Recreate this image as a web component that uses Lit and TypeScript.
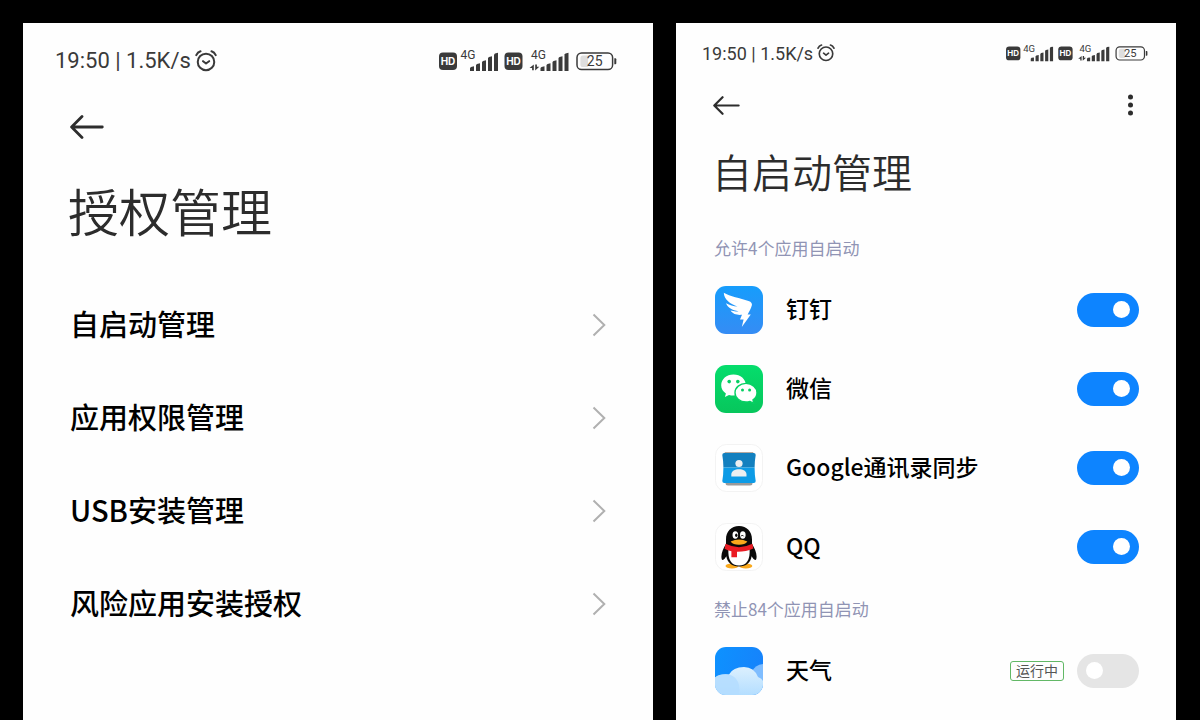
import { LitElement, html, svg, css } from "lit";
import { customElement, property } from "lit/decorators.js";

const BARS = [
  { x: 0, top: 19.5 },
  { x: 6, top: 16.5 },
  { x: 12, top: 13.5 },
  { x: 18, top: 9.5 },
  { x: 24, top: 6 },
];

const signal = (left: number) => svg`${BARS.map(
  (b) => svg`<path d="M${left + b.x} 24V${b.top + 1.4}l1-1l3-.6V24z" />`
)}`;

@customElement("status-bar")
export class StatusBar extends LitElement {
  static styles = css`
    :host {
      display: flex;
      align-items: center;
      justify-content: space-between;
      color: #3a3a3a;
      font-family: Roboto, sans-serif;
    }
    .left {
      display: flex;
      align-items: center;
      gap: 4px;
      white-space: nowrap;
    }
    .alarm {
      width: 1em;
      height: 1em;
    }
    .icons {
      width: var(--icons-width, 178px);
      height: auto;
      fill: #3a3a3a;
    }
    .tag {
      font: 700 10px Inter, sans-serif;
      fill: #fff;
    }
    .net {
      font: 400 12px Roboto, sans-serif;
    }
    .pct {
      font: 400 14px Roboto, sans-serif;
    }
  `;

  render() {
    return html`
      <div class="left">
        <span>19:50 | 1.5K/s</span>
        <svg class="alarm" viewBox="0 0 24 24" fill="none" stroke="#3a3a3a" stroke-width="2.2" stroke-linecap="round" stroke-linejoin="round">
          <circle cx="12" cy="13" r="9" />
          <path d="M8.8 12.200l3.200 2.600l3.400-2.600M1.400 5.600C2.400 3.400 4 2 6 1.400M22.600 5.600C21.600 3.400 20 2 18 1.400" />
        </svg>
      </div>
      <svg class="icons" viewBox="0 0 178 28">
        <rect x="0" y="5.5" width="18" height="17.5" rx="4" />
        <text class="tag" x="9" y="18" text-anchor="middle">HD</text>
        <text class="net" x="21.5" y="12.3">4G</text>
        ${signal(31)}
        <rect x="65.5" y="5.5" width="18" height="17.5" rx="4" />
        <text class="tag" x="74.5" y="18" text-anchor="middle">HD</text>
        <text class="net" x="92" y="12.3">4G</text>
        <path d="M94.8 17.4v5.8h-1.7v-2.200h-2.600zM96.200 23.400v-5.800h1.700v2.200h2.400z" />
        ${signal(101.5)}
        <rect x="138" y="6" width="35.6" height="16.6" rx="4.6" fill="none" stroke="#3a3a3a" stroke-width="1.5" />
        <path d="M144 8.6h5v11.4h-5q-2.6 0-2.6-2.6v-6.2q0-2.6 2.6-2.6z" fill="#dedede" />
        <text class="pct" x="155.7" y="19.3" text-anchor="middle">25</text>
        <path d="M175.3 11.2h1q1 0 1 1v4q0 1-1 1h-1z" />
      </svg>
    `;
  }
}

const backArrow = html`<svg viewBox="0 0 34 24" fill="none" stroke="#2d2d2d" stroke-width="2.8" stroke-linecap="round" stroke-linejoin="round">
  <path d="M32.3 12H2M12 1.6L1.6 12L12 22.4" />
</svg>`;

const shared = css`
  :host {
    display: block;
    background: #fefefe;
    color: #000;
  }
  h1 {
    margin: 0;
    font-weight: 350;
    color: #2c2c2c;
  }
  ul {
    list-style: none;
    margin: 0;
    padding: 0;
  }
  button {
    border: 0;
    background: none;
    padding: 0;
    display: flex;
    align-items: center;
    cursor: pointer;
  }
`;

@customElement("permission-screen")
export class PermissionScreen extends LitElement {
  static styles = [
    shared,
    css`
      status-bar {
        padding: 22px 36px 0 32px;
        height: 31px;
        font-size: 22px;
      }
      .back {
        margin: 27px 0 0 47px;
        height: 48px;
      }
      .back svg {
        width: 34px;
        height: 24px;
      }
      h1 {
        margin: 29px 45px 0;
        font-size: 51px;
        line-height: 60px;
      }
      ul {
        margin-top: 38px;
        padding: 0 47px;
      }
      .row {
        display: flex;
        align-items: center;
        justify-content: space-between;
        height: 93px;
        font-size: 29px;
        font-weight: 500;
        color: inherit;
        text-decoration: none;
      }
      .row span {
        padding-bottom: 4px;
      }
      .row svg {
        width: 14px;
        height: 24px;
      }
    `,
  ];

  items = ["自启动管理", "应用权限管理", "USB安装管理", "风险应用安装授权"];

  render() {
    return html`
      <status-bar></status-bar>
      <button class="back" aria-label="返回">${backArrow}</button>
      <h1>授权管理</h1>
      <ul>
        ${this.items.map(
          (name) => html`<li>
            <a class="row" href="#">
              <span>${name}</span>
              <svg viewBox="0 0 14 24" fill="none" stroke="#b0b0b0" stroke-width="2">
                <path d="M1.5 1.5L12.3 12L1.5 22.5" />
              </svg>
            </a>
          </li>`
        )}
      </ul>
    `;
  }
}

const icons = {
  dingtalk: html`<svg viewBox="0 0 48 48">
    <defs>
      <linearGradient id="dt" x1="0" y1="0" x2="0" y2="1">
        <stop offset="0" stop-color="#169dfc" />
        <stop offset="1" stop-color="#358cf4" />
      </linearGradient>
    </defs>
    <rect width="48" height="48" rx="11" fill="url(#dt)" />
    <path fill="#fff" d="M8.8 6.8C15 10.5 25 12.2 33.5 15C36.5 16 37.4 17.6 36.8 19.5C36 22.5 34.3 25.5 32.6 28.6H35.8L26.8 41L28.6 33.6H25L27 28.8C22.5 29.2 18 28.6 15.6 24.6C18 25.4 21 25.6 23.5 25.2C17.5 24 12.6 21.8 11 17.2C14.5 19.2 18.5 20.2 22.5 20.5C15.5 18 9 14 8.8 6.8Z" />
  </svg>`,
  wechat: html`<svg viewBox="0 0 48 48">
    <defs>
      <linearGradient id="wx" x1="0" y1="0" x2="0" y2="1">
        <stop offset="0" stop-color="#05dd6c" />
        <stop offset="1" stop-color="#07c65c" />
      </linearGradient>
    </defs>
    <rect width="48" height="48" rx="11" fill="url(#wx)" />
    <path fill="#fff" d="M18.5 9.5C11.5 9.5 6.2 14.2 6.2 20.2C6.2 23.6 8 26.5 10.9 28.4L9.9 32L14 29.9C15.5 30.3 17 30.6 18.5 30.6C25.500 30.6 30.9 26 30.9 20.1C30.9 14.2 25.5 9.5 18.5 9.5Z" />
    <path fill="#fff" stroke="#06d164" stroke-width="1.4" d="M31 18.4C37.1 18.4 42 22.6 42 27.7C42 30.7 40.4 33.2 38 34.9L38.7 38.3L35 36.4C33.7 36.8 32.4 37 31 37C24.9 37 20 32.9 20 27.7C20 22.6 24.9 18.4 31 18.4Z" />
    <g fill="#06cf63">
      <circle cx="14.2" cy="16.6" r="1.8" />
      <circle cx="22.8" cy="16.6" r="1.8" />
      <circle cx="27.5" cy="25" r="1.5" />
      <circle cx="34.6" cy="25" r="1.5" />
    </g>
  </svg>`,
  contacts: html`<svg viewBox="0 0 48 48">
    <rect x=".5" y=".5" width="47" height="47" rx="11" fill="#fff" stroke="#f3f3f3" />
    <path d="M10.5 37h27v2q0 2.5-2.5 2.5H13q-2.5 0-2.5-2.5z" fill="#9a9a9a" />
    <path d="M9.5 8h29l-1.5 3h-26z" fill="#b5a9a0" />
    <path d="M7.3 11Q7.3 9 9.3 9H38.7Q40.7 9 40.7 11Q39.6 17 39.6 23.500H8.4Q8.4 17 7.3 11Z" fill="#1380bf" />
    <path d="M8.4 23.5H39.6Q39.6 31 40.7 37Q40.7 39 38.7 39H9.3Q7.3 39 7.3 37Q8.4 31 8.4 23.5Z" fill="#0d9be6" />
    <circle cx="24" cy="19.5" r="3.6" fill="#eceff1" />
    <path d="M16.3 32.5V30.5C16.3 27 20 25.2 24 25.2C28 25.2 31.5 27 31.5 30.5V32.5Z" fill="#eceff1" />
  </svg>`,
  qq: html`<svg viewBox="0 0 48 48">
    <rect x=".5" y=".5" width="47" height="47" rx="11" fill="#fff" stroke="#f3f3f3" />
    <ellipse cx="17" cy="43" rx="6.5" ry="2.4" fill="#f9a81c" />
    <ellipse cx="30.8" cy="43" rx="6.5" ry="2.4" fill="#f9a81c" />
    <path d="M24 3C16.2 3 11 8.5 11 16.5V21C8.5 25 6.4 29.5 6.4 33.5C6.4 36 7 37.2 7.8 37C9 36.8 10.3 35 11.3 33.2C12.2 39.5 17 43.5 24 43.5C31 43.5 35.8 39.5 36.6 33.2C37.6 35 39 36.8 40.2 37C41 37.2 41.6 36 41.6 33.5C41.6 29.5 39.5 25 37 21V16.5C37 8.5 31.8 3 24 3Z" fill="#0a0a0a" />
    <path d="M13.4 26H34.6Q35.5 42.5 24 42.5Q12.5 42.5 13.4 26Z" fill="#fff" />
    <path d="M10.6 20.8Q24 27.6 37.4 20.8L38.3 25.4Q31 28.8 22 28.7V34.3H16.4V28.2Q12.5 27.5 9.6 25.8Z" fill="#ea1c24" />
    <ellipse cx="20.3" cy="12" rx="2.8" ry="3.7" fill="#fff" />
    <ellipse cx="27.8" cy="12" rx="2.8" ry="3.7" fill="#fff" />
    <ellipse cx="21.3" cy="12.3" rx="1.2" ry="1.7" fill="#0a0a0a" />
    <path d="M26.2 13.3Q27.2 10.7 28.6 13.3" fill="none" stroke="#0a0a0a" stroke-width="1" />
    <path d="M15.6 18.4Q24 14.5 32.4 18.4Q30 21.7 24 21.7Q18 21.7 15.6 18.4Z" fill="#f9a81c" />
  </svg>`,
  weather: html`<svg viewBox="0 0 48 48">
    <defs>
      <linearGradient id="sky" x1="0" y1="0" x2="1" y2=".3">
        <stop offset="0" stop-color="#0d92ff" />
        <stop offset="1" stop-color="#1683fb" />
      </linearGradient>
      <linearGradient id="cloud" x1="0" y1="0" x2="0" y2="1">
        <stop offset="0" stop-color="#dcf0fe" />
        <stop offset="1" stop-color="#b4deff" />
      </linearGradient>
      <clipPath id="tile"><rect width="48" height="48" rx="11" /></clipPath>
    </defs>
    <g clip-path="url(#tile)">
      <rect width="48" height="48" fill="url(#sky)" />
      <path d="M36 26Q40 17.500 48 17V48H30Z" fill="#7fbdff" />
      <path d="M0 30.500Q5 26.500 14 27.500Q18 20 29 20Q39 20 43 30Q47 31.500 48 34V48H0Z" fill="url(#cloud)" />
      <path d="M0 30.500Q5 26.500 14 27.500Q22 29.500 24 38Q25 43 24 48H0Z" fill="#b3dcff" opacity=".8" />
    </g>
  </svg>`,
};

interface AppEntry {
  id: keyof typeof icons;
  name: string;
  on: boolean;
  running?: boolean;
}

@customElement("app-row")
export class AppRow extends LitElement {
  static styles = css`
    :host {
      display: block;
    }
    .row {
      display: flex;
      align-items: center;
      height: 79px;
      font-size: 23px;
      font-weight: 500;
    }
    .row > svg {
      width: 48px;
      height: 48px;
      margin-right: 23px;
    }
    label {
      flex: 1;
      padding-bottom: 3px;
    }
    .badge {
      margin-right: 13px;
      padding: 0 5px 2px;
      border: 1px solid #62b866;
      border-radius: 3px;
      font-size: 14px;
      font-weight: 400;
      line-height: 16px;
      color: #555;
    }
    .switch {
      appearance: none;
      display: flex;
      align-items: center;
      box-sizing: border-box;
      width: 62px;
      height: 34px;
      margin: 0;
      padding: 0 9px;
      border-radius: 17px;
      background: #e5e5e5;
      cursor: pointer;
    }
    .switch::before {
      content: "";
      width: 17px;
      height: 17px;
      border-radius: 50%;
      background: #fff;
    }
    .switch:checked {
      background: #0d84ff;
      justify-content: flex-end;
    }
  `;

  @property({ attribute: false }) app!: AppEntry;

  render() {
    const { id, name, on, running } = this.app;
    return html`<div class="row">
      ${icons[id]}
      <label for="toggle">${name}</label>
      ${running ? html`<span class="badge">运行中</span>` : null}
      <input id="toggle" class="switch" type="checkbox" role="switch" ?checked=${on} />
    </div>`;
  }
}

@customElement("autostart-screen")
export class AutostartScreen extends LitElement {
  static styles = [
    shared,
    css`
      status-bar {
        --icons-width: 142px;
        padding: 16px 28px 0 26px;
        height: 28px;
        font-size: 18px;
      }
      header {
        display: flex;
        justify-content: space-between;
        align-items: center;
        height: 40px;
        margin: 18px 40px 0 37px;
      }
      .back svg {
        width: 27px;
        height: 19px;
      }
      .more svg {
        width: 11px;
        height: 24px;
      }
      h1 {
        margin: 22px 36px 0;
        font-size: 40px;
        line-height: 48px;
      }
      h2 {
        margin: 11px 38px 10px;
        font-size: 17px;
        font-weight: 400;
        line-height: 24px;
        color: #9094b4;
      }
      h1 + h2 {
        margin-top: 41px;
      }
      ul {
        padding: 0 37px 0 39px;
      }
    `,
  ];

  allowed: AppEntry[] = [
    { id: "dingtalk", name: "钉钉", on: true },
    { id: "wechat", name: "微信", on: true },
    { id: "contacts", name: "Google通讯录同步", on: true },
    { id: "qq", name: "QQ", on: true },
  ];

  denied: AppEntry[] = [{ id: "weather", name: "天气", on: false, running: true }];

  list(apps: AppEntry[]) {
    return html`<ul>
      ${apps.map((app) => html`<li><app-row .app=${app}></app-row></li>`)}
    </ul>`;
  }

  render() {
    return html`
      <status-bar></status-bar>
      <header>
        <button class="back" aria-label="返回">${backArrow}</button>
        <button class="more" aria-label="更多">
          <svg viewBox="0 0 11 24" fill="#2d2d2d">
            <circle cx="5.5" cy="4" r="2.5" />
            <circle cx="5.5" cy="12" r="2.5" />
            <circle cx="5.5" cy="20" r="2.5" />
          </svg>
        </button>
      </header>
      <h1>自启动管理</h1>
      <h2>允许4个应用自启动</h2>
      ${this.list(this.allowed)}
      <h2>禁止84个应用自启动</h2>
      ${this.list(this.denied)}
    `;
  }
}

@customElement("app-root")
export class AppRoot extends LitElement {
  static styles = css`
    :host {
      display: grid;
      grid-template-columns: 63fr 50fr;
      gap: 23px;
      box-sizing: border-box;
      min-height: 100vh;
      padding: 23px 24px 0 23px;
      background: #000;
      font-family: "Noto Sans CJK SC", sans-serif;
    }
  `;

  render() {
    return html`
      <permission-screen></permission-screen>
      <autostart-screen></autostart-screen>
    `;
  }
}
